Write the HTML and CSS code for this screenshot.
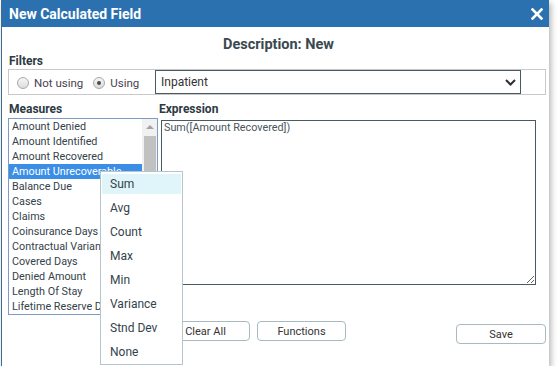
FILE: index.html
```html
<!DOCTYPE html>
<html lang="en">
<head>
    <meta charset="UTF-8">
    <title>New Calculated Field</title>
    <link rel="stylesheet" href="styles.css">
</head>
<body>
    <div class="dialog">
        <div class="titlebar">
            <span class="title">New Calculated Field</span>
            <svg class="close" width="12" height="12" viewBox="0 0 12 12">
                <path d="M1.5 1.5 L10.5 10.5 M10.5 1.5 L1.5 10.5" stroke="#fff" stroke-width="2.6" stroke-linecap="square"/>
            </svg>
        </div>

        <div class="content">
            <div class="desc">Description: New</div>

            <div class="label">Filters</div>
            <div class="filter-box">
                <div class="radios">
                    <span class="radio"></span><span class="radio-text">Not using</span>
                    <span class="radio checked"></span><span class="radio-text">Using</span>
                </div>
                <div class="select">
                    <span>Inpatient</span>
                    <svg width="11" height="7" viewBox="0 0 11 7">
                        <path d="M1 1 L5.5 5.5 L10 1" fill="none" stroke="#2b2f33" stroke-width="2"/>
                    </svg>
                </div>
            </div>

            <div class="workspace">
                <div class="measures">
                    <div class="label pane-label">Measures</div>
                    <div class="listbox">
                        <div class="rows">
                            <div class="row">Amount Denied</div>
                            <div class="row">Amount Identified</div>
                            <div class="row">Amount Recovered</div>
                            <div class="row selected">Amount Unrecoverable</div>
                            <div class="row">Balance Due</div>
                            <div class="row">Cases</div>
                            <div class="row">Claims</div>
                            <div class="row">Coinsurance Days</div>
                            <div class="row">Contractual Variance</div>
                            <div class="row">Covered Days</div>
                            <div class="row">Denied Amount</div>
                            <div class="row">Length Of Stay</div>
                            <div class="row">Lifetime Reserve Days</div>
                        </div>
                        <div class="scrollbar">
                            <div class="arrow-up"></div>
                            <div class="thumb"></div>
                        </div>
                    </div>
                </div>

                <div class="expression">
                    <div class="label pane-label">Expression</div>
                    <textarea class="expr-input" readonly>Sum([Amount Recovered])</textarea>
                    <div class="actions">
                        <button class="btn">Clear All</button>
                        <button class="btn">Functions</button>
                        <button class="btn save">Save</button>
                    </div>
                </div>
            </div>

            <!-- aggregate menu opened on the selected measure -->
            <div class="menu">
                <div class="menu-item active">Sum</div>
                <div class="menu-item">Avg</div>
                <div class="menu-item">Count</div>
                <div class="menu-item">Max</div>
                <div class="menu-item">Min</div>
                <div class="menu-item">Variance</div>
                <div class="menu-item">Stnd Dev</div>
                <div class="menu-item">None</div>
            </div>
        </div>
    </div>
</body>
</html>
```

FILE: styles.css
```css
* {
    margin: 0;
    padding: 0;
    box-sizing: border-box;
}

body {
    font-family: 'Roboto', 'Liberation Sans', sans-serif;
    background: #fff;
    color: #34424a;
}

.dialog {
    width: 548px;
    height: 366px;
    margin-left: 1px;
    background: #fff;
    border-left: 1px solid #3f6c93;
    box-shadow: 2px 3px 6px rgba(0, 0, 0, 0.3);
}

.titlebar {
    height: 27px;
    background: #2b71af;
    display: flex;
    align-items: center;
    justify-content: space-between;
    padding: 0 6px 0 7px;
}

.title {
    color: #fff;
    font-size: 14px;
    font-weight: bold;
    padding-top: 1px;
}

.content {
    position: relative;
    padding: 8px 0 0 6px;
}

.desc {
    line-height: 19px;
    font-size: 14.5px;
    font-weight: bold;
    text-align: center;
    color: #3a4850;
}

.label {
    font-size: 12px;
    font-weight: bold;
    line-height: 15px;
    padding-left: 1px;
    color: #2d3a42;
}

/* filters */
.filter-box {
    width: 538px;
    height: 26px;
    border: 1px solid #c8c8c8;
    display: flex;
}

.radios {
    width: 146px;
    display: flex;
    align-items: center;
    padding: 2px 0 0 8px;
    font-size: 11.5px;
    color: #4a4250;
}

.radio {
    width: 12px;
    height: 12px;
    border-radius: 50%;
    border: 1px solid #a8a8a8;
    background: linear-gradient(#f6f6f6, #dcdcdc);
    display: flex;
    align-items: center;
    justify-content: center;
}

.radio.checked::after {
    content: "";
    width: 4px;
    height: 4px;
    border-radius: 50%;
    background: #4b4b4b;
}

.radio-text {
    margin: 0 10px 0 5px;
}

.select {
    width: 366px;
    height: 24px;
    border: 1px solid #4a5a62;
    display: flex;
    align-items: center;
    justify-content: space-between;
    padding: 0 4px 0 5px;
    font-size: 12px;
    color: #333;
}

/* measures + expression */
.workspace {
    display: flex;
    margin-top: 7px;
}

.measures {
    width: 150px;
}

.pane-label {
    margin-bottom: 1px;
}

.listbox {
    height: 197px;
    border: 1px solid #7b9cc4;
    display: flex;
    overflow: hidden;
}

.rows {
    flex: 1;
    overflow: hidden;
}

.row {
    height: 15px;
    line-height: 15px;
    font-size: 10.8px;
    padding-left: 3px;
    white-space: nowrap;
    overflow: hidden;
    color: #34424a;
}

.row.selected {
    background: #3a8ee6;
    color: #fff;
}

.scrollbar {
    width: 15px;
    background: #f1f1f1;
    display: flex;
    flex-direction: column;
    align-items: center;
}

.arrow-up {
    margin-top: 6px;
    width: 0;
    height: 0;
    border-left: 4px solid transparent;
    border-right: 4px solid transparent;
    border-bottom: 4px solid #a3a3a3;
}

.thumb {
    margin-top: 7px;
    width: 12px;
    height: 70px;
    background: #c1c1c1;
}

.expression {
    width: 388px;
    display: flex;
    flex-direction: column;
}

.expr-input {
    width: 375px;
    height: 165px;
    margin: 2px 0 0 3px;
    border: 1px solid #4a5a62;
    padding: 0 2px;
    font-family: 'Roboto', 'Liberation Sans', sans-serif;
    font-size: 10.8px;
    line-height: 14px;
    color: #4a555c;
    outline: none;
}

.actions {
    display: flex;
    align-items: flex-start;
    margin: 36px 0 0 3px;
    gap: 7px;
}

.btn {
    width: 89px;
    height: 20px;
    background: #fff;
    border: 1px solid #a9b9c0;
    border-radius: 4px;
    font-family: 'Roboto', 'Liberation Sans', sans-serif;
    font-size: 11px;
    color: #333;
}

.btn.save {
    width: 90px;
    margin: 3px 0 0 auto;
}

/* popup menu */
.menu {
    position: absolute;
    left: 98px;
    top: 144px;
    width: 83px;
    background: #fff;
    border: 1px solid #b4c6cc;
    padding: 0 1px;
    display: flex;
    flex-direction: column;
}

.menu-item {
    height: 20px;
    line-height: 20px;
    margin: 2px 0;
    padding-left: 8px;
    font-size: 12px;
    color: #34434b;
}

.menu-item.active {
    background: #e0f5fa;
}
```
